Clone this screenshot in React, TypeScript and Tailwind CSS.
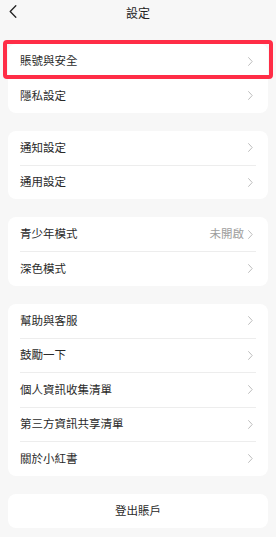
import { Fragment } from 'react'

interface Row {
  label: string
  value?: string
}

const GROUPS: Row[][] = [
  [{ label: '賬號與安全' }, { label: '隱私設定' }],
  [{ label: '通知設定' }, { label: '通用設定' }],
  [{ label: '青少年模式', value: '未開啟' }, { label: '深色模式' }],
  [
    { label: '幫助與客服' },
    { label: '鼓勵一下' },
    { label: '個人資訊收集清單' },
    { label: '第三方資訊共享清單' },
    { label: '關於小紅書' },
  ],
]

function Chevron() {
  return (
    <svg width="5" height="9" viewBox="0 0 5 9" fill="none" className="shrink-0">
      <path d="M0.6 0.6 L4.2 4.5 L0.6 8.4" stroke="#bdbdbd" strokeWidth="1" strokeLinecap="round" strokeLinejoin="round" />
    </svg>
  )
}

export default function App() {
  return (
    <div
      className="relative w-[276px] h-[537px] overflow-hidden bg-[#f7f7f7] text-[#2a2a2a]"
      style={{ fontFamily: '"Noto Sans CJK TC", "Noto Sans", sans-serif' }}
    >
      {/* Header */}
      <div className="relative h-[26px] flex items-center justify-center">
        <svg width="8" height="13" viewBox="0 0 8 13" fill="none" className="absolute left-[9px] top-[5px]">
          <path d="M6.8 0.8 L1.2 6.5 L6.8 12.2" stroke="#222222" strokeWidth="1.3" strokeLinecap="round" strokeLinejoin="round" />
        </svg>
        <span className="text-[12px] leading-none text-[#222222]">設定</span>
      </div>

      <div className="flex flex-col gap-[18px] px-2 pt-[18px]">
        {GROUPS.map((group, gi) => (
          <div key={gi} className="bg-white rounded-[8px] flex flex-col">
            {group.map((row, ri) => (
              <Fragment key={row.label}>
                {ri > 0 && <div className="mx-3 h-[0.5px] bg-[#ededed]" />}
                <div className="h-[34px] flex items-center justify-between pl-3 pr-[15px]">
                  <span className="text-[11.5px] leading-none">{row.label}</span>
                  <div className="flex items-center gap-[4px]">
                    {row.value && <span className="text-[11.5px] leading-none text-[#9e9e9e]">{row.value}</span>}
                    <Chevron />
                  </div>
                </div>
              </Fragment>
            ))}
          </div>
        ))}

        <div className="bg-white rounded-[8px] h-[34px] flex items-center justify-center">
          <span className="text-[11.5px] leading-none">登出賬戶</span>
        </div>
      </div>

      {/* highlight overlay */}
      <div className="absolute left-[3px] top-[40px] w-[270px] h-[39px] border-[4px] border-[#ff2d46] rounded-[4px] pointer-events-none" />
    </div>
  )
}
